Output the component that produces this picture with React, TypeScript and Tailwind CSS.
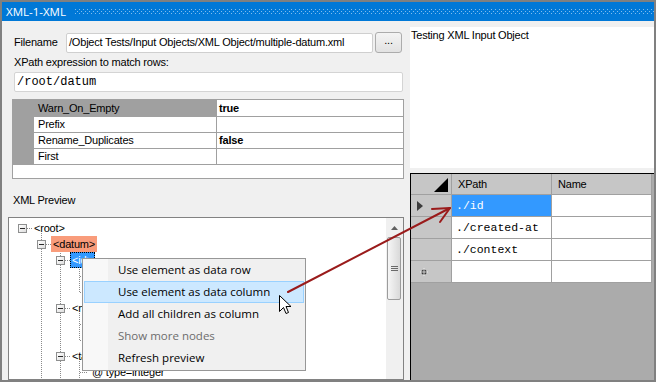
import React from "react";

type TreeRow = { lvl: 0 | 1 | 2 | 3; label: string; box?: boolean; kind?: "datum" | "sel" };

const tree: TreeRow[] = [
  { lvl: 0, label: "<root>", box: true },
  { lvl: 1, label: "<datum>", box: true, kind: "datum" },
  { lvl: 2, label: "<id>", box: true, kind: "sel" },
  { lvl: 3, label: "" },
  { lvl: 3, label: "" },
  { lvl: 2, label: "<name>", box: true },
  { lvl: 3, label: "" },
  { lvl: 3, label: "" },
  { lvl: 2, label: "<tags>", box: true },
  { lvl: 3, label: "@ type=integer" },
];

const spacer: Record<number, string> = {
  0: "w-[9px]",
  1: "w-[28px]",
  2: "w-[47px]",
  3: "w-[81px]",
};

const props = [
  { k: "Warn_On_Empty", v: "true", sel: true },
  { k: "Prefix", v: "" },
  { k: "Rename_Duplicates", v: "false" },
  { k: "First", v: "" },
];

const menuItems = [
  { t: "Use element as data row" },
  { t: "Use element as data column", hot: true },
  { t: "Add all children as column" },
  { t: "Show more nodes", dis: true },
  { t: "Refresh preview" },
];

const gridRows = [
  { x: "./id", sel: true, cur: true },
  { x: "./created-at" },
  { x: "./context" },
  { x: "", nw: true },
];

function TreeLines() {
  const d = "1 1";
  const c = "#8a8a8a";
  const hs: [number, number, number][] = [];
  tree.forEach((r, i) => {
    const y = 10.5 + 16 * i;
    if (r.box) hs.push([18 + 19 * r.lvl, 23 + 19 * r.lvl, y]);
    else hs.push([71, 79, y]);
  });
  const vs: [number, number, number][] = [
    [32.5, 15, 200],
    [51.5, 31, 200],
    [70.5, 47, 75],
    [70.5, 95, 123],
    [70.5, 143, 200],
  ];
  return (
    <svg className="absolute inset-0 w-full h-full" shapeRendering="crispEdges">
      {hs.map(([a, b, y], i) => (
        <line key={"h" + i} x1={a} x2={b} y1={y} y2={y} stroke={c} strokeDasharray={d} />
      ))}
      {vs.map(([x, a, b], i) => (
        <line key={"v" + i} x1={x} x2={x} y1={a} y2={b} stroke={c} strokeDasharray={d} />
      ))}
    </svg>
  );
}

function Box() {
  return (
    <div className="w-[9px] h-[9px] self-start mt-[4px] border border-[#8e8f8f] bg-gradient-to-br from-white to-[#dedede] flex items-center justify-center shrink-0">
      <div className="w-[5px] h-[1px] bg-[#2a2a2a]" />
    </div>
  );
}

export default function App() {
  return (
    <div className="relative w-[656px] h-[382px] bg-[#808080] p-[2px] flex flex-col overflow-hidden font-['Liberation_Sans',Arial,sans-serif] text-[11px] tracking-[-0.2px] text-black">
      {/* Title bar */}
      <div className="h-[19px] shrink-0 bg-[#0078d7] flex items-center pl-[4px] text-white font-['Open_Sans',sans-serif] text-[11.5px] tracking-normal">
        <span className="leading-none">XML-1-XML</span>
        <svg className="ml-[9px] flex-1 h-[5px]">
          <defs>
            <pattern id="dots" width="4" height="4" patternUnits="userSpaceOnUse">
              <rect x="0" y="0" width="1" height="1" fill="#7fbcee" />
              <rect x="2" y="2" width="1" height="1" fill="#7fbcee" />
            </pattern>
          </defs>
          <rect width="100%" height="100%" fill="url(#dots)" />
        </svg>
      </div>

      {/* Body */}
      <div className="flex-1 min-h-0 flex bg-[#f0f0f0]">
        {/* Left panel */}
        <div className="w-[408px] shrink-0 flex flex-col">
          <div className="mt-[11px] h-[21px] flex items-center pl-[12px]">
            <span className="w-[52px]">Filename</span>
            <div className="w-[307px] h-[20px] bg-white border border-[#cfcfcf] rounded-[2px] flex items-center pl-[2px] whitespace-nowrap overflow-hidden">
              /Object Tests/Input Objects/XML Object/multiple-datum.xml
            </div>
            <div className="ml-[2px] w-[27px] h-[21px] border border-[#acacac] rounded-[3px] bg-gradient-to-b from-[#f4f4f4] to-[#e2e2e2] flex items-center justify-center pb-[4px]">
              ...
            </div>
          </div>
          <div className="mt-[3px] h-[13px] leading-[13px] pl-[12px]">XPath expression to match rows:</div>
          <div className="mt-[3px] ml-[12px] w-[389px] h-[20px] shrink-0 bg-white border border-[#d4d4d4] rounded-[2px] flex items-center pl-[2px] font-['Liberation_Mono','Courier_New',monospace] text-[12px] tracking-normal">
            /root/datum
          </div>

          {/* Property grid */}
          <div className="mt-[7px] ml-[10px] w-[392px] h-[80px] shrink-0 border border-[#a0a0a0] bg-white flex flex-col">
            {props.map((p, i) => (
              <div key={p.k} className={`${i === 0 ? "h-[17px]" : "h-[16px]"} shrink-0 flex border-b border-[#a0a0a0]`}>
                <div className="w-[21px] bg-[#a0a0a0]" />
                <div className={`w-[183px] border-r border-[#a0a0a0] pl-[4px] flex items-center ${p.sel ? "bg-[#a0a0a0]" : "bg-white"}`}>
                  {p.k}
                </div>
                <div className="flex-1 pl-[2px] flex items-center font-bold">{p.v}</div>
              </div>
            ))}
            <div className="flex-1" />
          </div>

          <div className="mt-[15px] h-[13px] leading-[13px] pl-[11px]">XML Preview</div>

          {/* Tree */}
          <div className="mt-[10px] ml-[6px] w-[396px] flex-1 min-h-0 border border-[#828282] bg-white flex overflow-hidden">
            <div className="relative flex-1 overflow-hidden">
              <TreeLines />
              <div className="relative pt-[2px] flex flex-col">
                {tree.map((r, i) => (
                  <div key={i} className="h-[16px] flex items-start shrink-0">
                    <div className={`${spacer[r.lvl]} shrink-0`} />
                    {r.box && <Box />}
                    {r.box && <div className="w-[5px] shrink-0" />}
                    {r.label !== "" && (
                      <div
                        className={
                          r.kind === "datum"
                            ? "h-[16px] leading-[16px] px-[2px] whitespace-nowrap bg-[#f99c7b]"
                            : r.kind === "sel"
                            ? "h-[16px] leading-[14px] px-[1px] whitespace-nowrap bg-[#3399ff] text-white border border-dotted border-black"
                            : "h-[16px] leading-[16px] px-[2px] whitespace-nowrap"
                        }
                      >
                        {r.label}
                      </div>
                    )}
                  </div>
                ))}
              </div>
            </div>
            {/* scrollbar */}
            <div className="w-[17px] shrink-0 bg-[#f0f0f0] flex flex-col">
              <div className="h-[17px] flex items-center justify-center pt-[3px]">
                <svg width="7" height="4">
                  <polygon points="0,4 3.5,0 7,4" fill="#606060" />
                </svg>
              </div>
              <div className="mt-[2px] ml-[1px] w-[14px] h-[63px] border border-[#9c9c9c] rounded-[2px] bg-gradient-to-r from-[#f6f6f6] to-[#d9d9d9] flex flex-col items-center justify-center gap-[1px]">
                <div className="w-[7px] h-[1px] bg-[#6a6a6a]" />
                <div className="w-[7px] h-[1px] bg-[#6a6a6a]" />
                <div className="w-[7px] h-[1px] bg-[#6a6a6a]" />
              </div>
            </div>
          </div>
        </div>

        {/* Right panel */}
        <div className="flex-1 flex flex-col pt-[6px]">
          <div className="h-[141px] shrink-0 bg-white pl-[1px] pt-[2px] leading-[13px]">Testing XML Input Object</div>
          <div className="mt-[5px] flex-1 border-t border-l border-black bg-[#ababab] flex flex-col">
            <div className="h-[21px] flex shrink-0">
              <div className="relative w-[41px] border-r border-b border-[#a0a0a0] bg-[#c6c6c6]">
                <svg className="absolute left-0 top-0" width="40" height="20">
                  <polygon points="37,4 37,18 23,18" fill="#000" />
                </svg>
              </div>
              <div className="w-[100px] border-r border-b border-[#a0a0a0] bg-[#c6c6c6] flex items-center pl-[6px]">XPath</div>
              <div className="w-[100px] border-r border-b border-[#a0a0a0] bg-[#c6c6c6] flex items-center pl-[6px]">Name</div>
            </div>
            {gridRows.map((r, i) => (
              <div key={i} className="h-[22px] flex shrink-0">
                <div className="w-[41px] border-r border-b border-[#a0a0a0] bg-[#c6c6c6] flex items-center pl-[6px]">
                  {r.cur && (
                    <svg width="6" height="10">
                      <polygon points="0,0 6,5 0,10" fill="#3c3c3c" />
                    </svg>
                  )}
                  {r.nw && (
                    <svg width="8" height="8" className="ml-[3px]">
                      <circle cx="4" cy="4" r="2.6" fill="#3a3a3a" />
                      <line x1="4" y1="0" x2="4" y2="8" stroke="#ffffff" strokeWidth="0.7" />
                      <line x1="0" y1="4" x2="8" y2="4" stroke="#ffffff" strokeWidth="0.7" />
                    </svg>
                  )}
                </div>
                <div
                  className={`w-[100px] border-r border-b border-[#a0a0a0] flex items-center pl-[4px] font-['Liberation_Mono','Courier_New',monospace] text-[11.5px] tracking-normal ${
                    r.sel ? "bg-[#3399ff] text-white" : "bg-white"
                  }`}
                >
                  {r.x}
                </div>
                <div className="w-[100px] border-r border-b border-[#a0a0a0] bg-white" />
              </div>
            ))}
          </div>
        </div>
      </div>

      {/* Context menu */}
      <div className="absolute left-[82px] top-[258px] w-[224px] h-[113px] border border-[#979797] bg-[#f0f0f0] font-['Open_Sans',sans-serif] text-[11.5px] tracking-normal">
        <div className="absolute left-0 top-0 bottom-0 w-[25px] bg-[#f8f8f8]" />
        <div className="relative flex flex-col">
          {menuItems.map((m) => (
            <div
              key={m.t}
              className={`h-[22px] mx-[1px] flex items-center pl-[33px] border whitespace-nowrap ${
                m.hot ? "bg-[#cce8ff] border-[#99d1ff]" : "border-transparent"
              } ${m.dis ? "text-[#6d6d6d]" : "text-black"}`}
            >
              {m.t}
            </div>
          ))}
        </div>
      </div>

      {/* Arrow annotation and cursor */}
      <svg className="absolute left-0 top-0 pointer-events-none" width="656" height="382">
        <line x1="288" y1="292" x2="450" y2="208" stroke="#9a1b1b" strokeWidth="2" strokeLinecap="round" />
        <polyline points="432,209 450,208 440,222" fill="none" stroke="#9a1b1b" strokeWidth="2" strokeLinecap="round" strokeLinejoin="round" />
        <path
          d="M279.5 295.5 L279.5 311.5 L283.5 307.5 L286 313.5 L288.5 312.5 L286 306.5 L291 306.5 Z"
          fill="#ffffff"
          stroke="#000000"
          strokeWidth="1"
          strokeLinejoin="miter"
        />
      </svg>
    </div>
  );
}
